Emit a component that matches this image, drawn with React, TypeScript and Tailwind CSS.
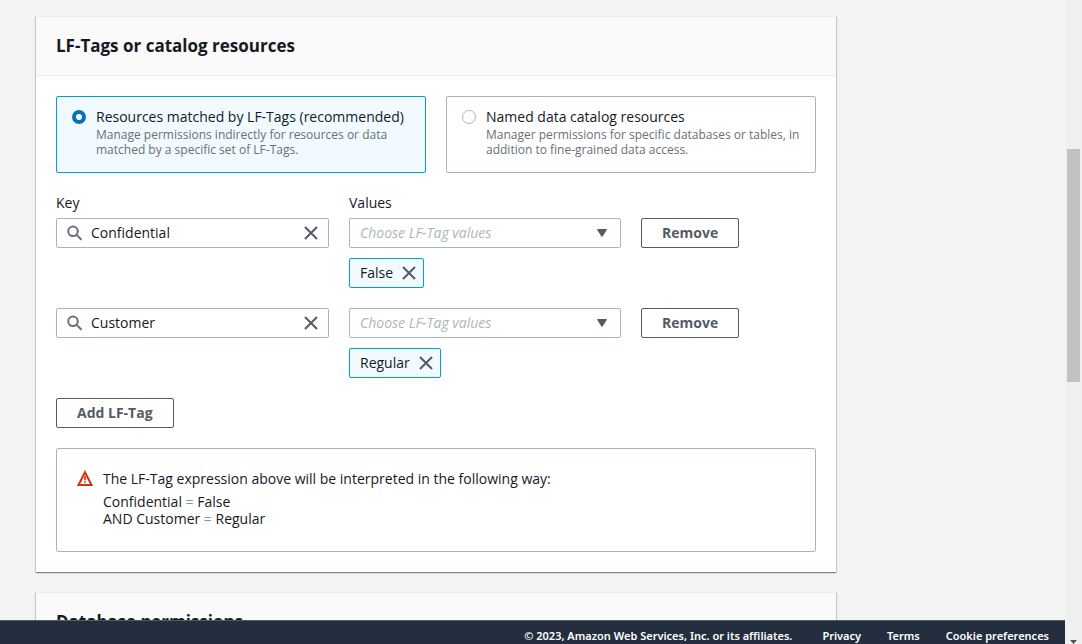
import { useId, useState, type ReactNode } from "react";

function SearchIcon() {
  return (
    <svg viewBox="0 0 16 16" className="size-4 shrink-0 text-[#687078]" fill="none" stroke="currentColor" strokeWidth="2" aria-hidden="true">
      <circle cx="6" cy="6.3" r="4.8" />
      <path d="M9.6 9.9 14.5 14.8" />
    </svg>
  );
}

function CloseIcon() {
  return (
    <svg viewBox="0 0 16 16" className="size-4" fill="none" stroke="currentColor" strokeWidth="2" aria-hidden="true">
      <path d="M2 2l12 12M14 2L2 14" />
    </svg>
  );
}

function WarningIcon() {
  return (
    <svg viewBox="0 0 16 16" className="mt-px size-4 shrink-0" fill="none" stroke="#d13212" aria-hidden="true">
      <path d="M8 2.2 14.5 15H1.5z" strokeWidth="2" />
      <path d="M8 6v4.2M8 11.2v1.6" strokeWidth="1.6" />
    </svg>
  );
}

function Card({ title, children }: { title: string; children?: ReactNode }) {
  return (
    <section className="max-w-[800px] border-t border-[#eaeded] bg-white shadow-[0_1px_1px_0_rgba(0,28,36,0.3),1px_1px_1px_0_rgba(0,28,36,0.15),-1px_1px_1px_0_rgba(0,28,36,0.15)]">
      <header className="border-b border-[#eaeded] bg-[#fafafa] px-5 py-[18px]">
        <h2 className="text-[17px] leading-[22px] font-bold">{title}</h2>
      </header>
      {children}
    </section>
  );
}

function ResourceTile({
  title,
  description,
  checked,
  onSelect,
}: {
  title: string;
  description: string;
  checked: boolean;
  onSelect: () => void;
}) {
  return (
    <label
      className={`flex items-start gap-2.5 rounded-xs border px-[15px] pt-2.5 pb-[15px] ${
        checked ? "border-[#00a1c9] bg-[#f1faff]" : "border-[#aab7b8] bg-white"
      }`}
    >
      <input
        type="radio"
        name="resource-method"
        checked={checked}
        onChange={onSelect}
        className="mt-[3px] size-3.5 shrink-0 appearance-none rounded-full border border-[#aab7b8] bg-white checked:border-4 checked:border-[#0073bb]"
      />
      <span>
        <span className="block leading-5">{title}</span>
        <span className="block text-[12px] leading-[15px] text-[#687078]">{description}</span>
      </span>
    </label>
  );
}

function ActionButton({ children }: { children: ReactNode }) {
  return (
    <button type="button" className="h-[30px] rounded-xs border border-[#545b64] bg-white px-5 leading-5 font-bold text-[#545b64]">
      {children}
    </button>
  );
}

function TagRow({ initialKey, value, labelled = false }: { initialKey: string; value: string; labelled?: boolean }) {
  const [key, setKey] = useState(initialKey);
  const id = useId();
  const labelClass = "mb-[5px] block leading-5";
  return (
    <div className="grid grid-cols-[273fr_272fr_175fr] gap-x-5">
      <div>
        {labelled && <label htmlFor={`${id}-key`} className={labelClass}>Key</label>}
        <div className="flex h-[30px] items-center gap-2 rounded-xs border border-[#aab7b8] bg-white pr-[9px] pl-2.5">
          <SearchIcon />
          <input
            id={`${id}-key`}
            aria-label={labelled ? undefined : "Key"}
            value={key}
            onChange={(e) => setKey(e.target.value)}
            className="h-5 w-full min-w-0 flex-1 bg-transparent leading-5 outline-none"
          />
          <button type="button" aria-label="Clear key" onClick={() => setKey("")} className="text-[#545b64]">
            <CloseIcon />
          </button>
        </div>
      </div>
      <div>
        {labelled && <label htmlFor={`${id}-values`} className={labelClass}>Values</label>}
        <div className="grid items-center">
          <select
            id={`${id}-values`}
            aria-label={labelled ? undefined : "Values"}
            defaultValue=""
            className="col-start-1 row-start-1 h-[30px] w-full appearance-none rounded-xs border border-[#aab7b8] bg-white pr-8 pl-2.5 leading-5 text-[#aab7b8] italic"
          >
            <option value="">Choose LF-Tag values</option>
          </select>
          <svg viewBox="0 0 16 16" className="pointer-events-none col-start-1 row-start-1 mr-[11px] size-4 justify-self-end" aria-hidden="true">
            <path d="M3.5 4.5h9L8 11.5z" fill="#545b64" stroke="#545b64" strokeLinejoin="round" />
          </svg>
        </div>
        <div className="mt-2.5 inline-flex h-[30px] items-center gap-2 rounded-xs border border-[#00a1c9] bg-[#f1faff] pr-1.5 pl-2.5 align-top">
          <span className="leading-5">{value}</span>
          <button type="button" aria-label={`Remove ${value}`} className="text-[#545b64]">
            <CloseIcon />
          </button>
        </div>
      </div>
      <div className={labelled ? "pt-[25px]" : ""}>
        <ActionButton>Remove</ActionButton>
      </div>
    </div>
  );
}

export default function App() {
  const [method, setMethod] = useState("tags");
  return (
    <div className="flex h-screen overflow-hidden bg-[#f2f3f3] font-['Open_Sans','Noto_Sans',sans-serif] text-[14px] text-[#16191f]">
      <div className="flex min-w-0 flex-1 flex-col">
        <main className="flex min-h-0 flex-1 flex-col gap-5 overflow-hidden pt-4 pr-5 pl-9 *:shrink-0">
          <Card title="LF-Tags or catalog resources">
            <div className="flex flex-col gap-5 p-5">
              <div className="grid grid-cols-2 gap-5">
                <ResourceTile
                  title="Resources matched by LF-Tags (recommended)"
                  description="Manage permissions indirectly for resources or data matched by a specific set of LF-Tags."
                  checked={method === "tags"}
                  onSelect={() => setMethod("tags")}
                />
                <ResourceTile
                  title="Named data catalog resources"
                  description="Manager permissions for specific databases or tables, in addition to fine-grained data access."
                  checked={method === "named"}
                  onSelect={() => setMethod("named")}
                />
              </div>
              <TagRow initialKey="Confidential" value="False" labelled />
              <TagRow initialKey="Customer" value="Regular" />
              <div>
                <ActionButton>Add LF-Tag</ActionButton>
              </div>
              <div className="flex gap-2.5 rounded-xs border border-[#aab7b8] px-5 pt-5 pb-6">
                <WarningIcon />
                <div>
                  <p className="mb-1 leading-5">The LF-Tag expression above will be interpreted in the following way:</p>
                  <p className="leading-[17px]">Confidential <span className="text-[#879596]">=</span> False</p>
                  <p className="leading-[17px]">AND Customer <span className="text-[#879596]">=</span> Regular</p>
                </div>
              </div>
            </div>
          </Card>
          <Card title="Database permissions" />
        </main>
        <footer className="flex h-6 shrink-0 justify-end gap-[30px] overflow-hidden border-t border-[#545b64] bg-[#232f3e] px-4 pt-[7px] font-['Noto_Sans',sans-serif] text-[11px] leading-4 font-semibold text-white">
          <span className="whitespace-nowrap">© 2023, Amazon Web Services, Inc. or its affiliates.</span>
          <nav className="flex gap-[26px] whitespace-nowrap">
            <a href="#privacy">Privacy</a>
            <a href="#terms">Terms</a>
            <a href="#cookies">Cookie preferences</a>
          </nav>
        </footer>
      </div>
      <div className="flex w-[17px] shrink-0 flex-col items-center bg-[#f0f0f0]" aria-hidden="true">
        <div className="mt-[149px] h-[233px] w-[13px] bg-[#c1c1c1]" />
        <svg viewBox="0 0 7 4" className="mt-auto h-1 w-[7px]">
          <path d="M0 0h7L3.5 4z" fill="#505050" />
        </svg>
      </div>
    </div>
  );
}
